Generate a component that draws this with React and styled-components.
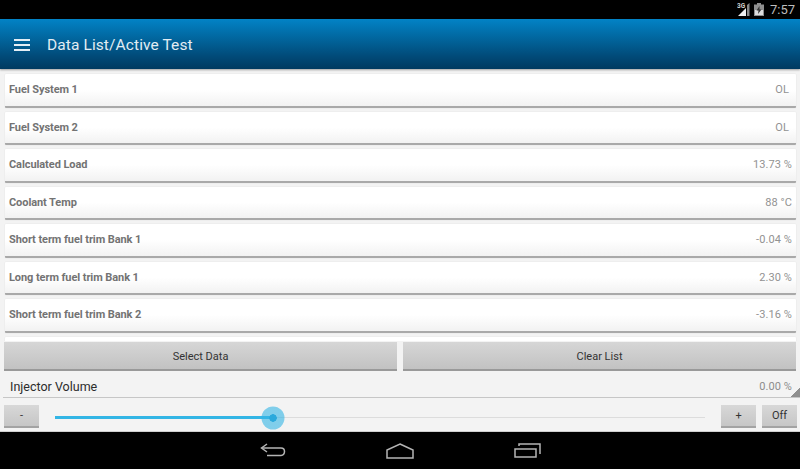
import styled, { createGlobalStyle } from "styled-components";

const rows = [
  ["Fuel System 1", "OL", true],
  ["Fuel System 2", "OL", true],
  ["Calculated Load", "13.73 %"],
  ["Coolant Temp", "88 °C"],
  ["Short term fuel trim Bank 1", "-0.04 %"],
  ["Long term fuel trim Bank 1", "2.30 %"],
  ["Short term fuel trim Bank 2", "-3.16 %"],
];

export default function App() {
  return (
    <Screen>
      <GlobalStyle />
      <StatusBar>
        <svg width="13" height="15" viewBox="0 0 13 15">
          <text x="0" y="6" fontSize="6.500" fontWeight="700" fill="#d0d0d0" fontFamily="Roboto, sans-serif">3G</text>
          <path d="M12.500 1v13H10V3z" fill="#8a8a8a" />
          <path d="M9 6v8H1z" fill="#efefef" />
        </svg>
        <svg width="10" height="13" viewBox="0 0 10 13">
          <path d="M3 0h4v1.500h3V13H0V1.500h3z" fill="#8f8f8f" />
          <path d="M1 7h8v5H1z" fill="#dcdcdc" />
          <path d="M5.500 3L2.500 7.500h2L4 11l3.500-4.500h-2z" fill="#333" />
        </svg>
        <Clock>7:57</Clock>
      </StatusBar>
      <Header>
        <Burger>
          <span />
          <span />
          <span />
        </Burger>
        <Title>Data List/Active Test</Title>
      </Header>
      <List>
        {rows.map(([name, value, bare]) => (
          <Row key={name}>
            <RowName>{name}</RowName>
            <RowValue $bare={bare}>{value}</RowValue>
          </Row>
        ))}
        <Row />
      </List>
      <Actions>
        <ActionButton>Select Data</ActionButton>
        <ActionButton>Clear List</ActionButton>
      </Actions>
      <TestRow>
        <TestName>Injector Volume</TestName>
        <TestValue>0.00 %</TestValue>
        <Corner />
      </TestRow>
      <SliderRow>
        <SmallButton>-</SmallButton>
        <Track>
          <Fill $pct={33.5} />
          <Thumb $pct={33.5} />
        </Track>
        <SmallButton>+</SmallButton>
        <SmallButton>Off</SmallButton>
      </SliderRow>
      <NavBar>
        <svg width="26" height="16" viewBox="0 0 26 16" fill="none" stroke="#b5b5b5" strokeWidth="1.500">
          <path d="M7 1L1.500 5 7 9" />
          <path d="M2 5h19q3.500 0 3.500 3.500T21 12.500H7" />
        </svg>
        <svg width="28" height="16" viewBox="0 0 28 16" fill="none" stroke="#b5b5b5" strokeWidth="1.500">
          <path d="M14 1L27 7v8H1V7z" />
        </svg>
        <svg width="27" height="15" viewBox="0 0 27 15" fill="none" stroke="#b5b5b5" strokeWidth="1.500">
          <path d="M1 6h21v8H1z" />
          <path d="M5 3V1h21v10" />
        </svg>
      </NavBar>
    </Screen>
  );
}

const GlobalStyle = createGlobalStyle`
  html, body {
    margin: 0;
    padding: 0;
    background: #000;
  }
`;

const Screen = styled.div`
  width: 800px;
  height: 469px;
  display: flex;
  flex-direction: column;
  overflow: hidden;
  background: #f3f3f3;
  font-family: Roboto, "Liberation Sans", sans-serif;
`;

const StatusBar = styled.div`
  height: 19px;
  flex: none;
  background: #000;
  display: flex;
  align-items: center;
  justify-content: flex-end;
  gap: 4px;
  padding-right: 5px;
`;

const Clock = styled.span`
  color: #bdbdbd;
  font-size: 13px;
  margin-left: 2px;
`;

const Header = styled.div`
  height: 50px;
  flex: none;
  display: flex;
  align-items: center;
  padding: 1px 0 0 14px;
  box-sizing: border-box;
  background: linear-gradient(#0283c6, #014a78 75%, #013a60);
  box-shadow: 0 1px 2px rgba(0, 0, 0, 0.35);
  position: relative;
`;

const Burger = styled.div`
  width: 16px;
  display: flex;
  flex-direction: column;
  gap: 3px;

  span {
    height: 2px;
    background: #e4eef5;
  }
`;

const Title = styled.h1`
  margin: 0 0 0 17px;
  color: #e2edf4;
  font-size: 15.5px;
  font-weight: 400;
  letter-spacing: 0.1px;
`;

const List = styled.div`
  height: 272px;
  flex: none;
  overflow: hidden;
  display: flex;
  flex-direction: column;
  gap: 4px;
  padding: 5px 4px 0 5px;
  box-sizing: border-box;
`;

const Row = styled.div`
  height: 33.5px;
  flex: none;
  box-sizing: border-box;
  display: flex;
  align-items: center;
  justify-content: space-between;
  padding: 0 4px;
  background: linear-gradient(#fff 50%, #f2f2f2);
  border-bottom: 2px solid #a9a9a9;
  border-radius: 1px;
  box-shadow: 0 0 1px rgba(0, 0, 0, 0.2);
`;

const RowName = styled.span`
  color: #737373;
  font-size: 11px;
  font-weight: 700;
  letter-spacing: -0.08px;
`;

const RowValue = styled.span`
  color: #929292;
  font-size: 11px;
  letter-spacing: 0.1px;
  padding-right: ${(p) => (p.$bare ? "3px" : "0")};
`;

const Actions = styled.div`
  height: 29px;
  flex: none;
  display: flex;
  gap: 6px;
  padding: 1px 4px 0;
`;

const ActionButton = styled.div`
  flex: 1;
  box-sizing: border-box;
  display: flex;
  align-items: center;
  justify-content: center;
  padding-top: 2px;
  color: #333;
  font-size: 11px;
  background: linear-gradient(#d6d6d6, #c2c2c2);
  border-bottom: 2px solid #999;
`;

const TestRow = styled.div`
  height: 27px;
  flex: none;
  position: relative;
  box-sizing: border-box;
  display: flex;
  align-items: center;
  justify-content: space-between;
  margin: 0 0 0 3px;
  padding: 5px 8px 0 7px;
  border-bottom: 1px solid #c6c6c6;
`;

const TestName = styled.span`
  color: #2c2c2c;
  font-size: 12.5px;
`;

const TestValue = styled.span`
  color: #8c8c8c;
  font-size: 11px;
  letter-spacing: 0.1px;
`;

const Corner = styled.div`
  position: absolute;
  right: 0;
  bottom: 0;
  width: 10px;
  height: 10px;
  background: linear-gradient(135deg, transparent 50%, #8f8f8f 50%);
`;

const SliderRow = styled.div`
  height: 34px;
  flex: none;
  display: flex;
  align-items: center;
  padding: 3px 3px 0 4px;
  gap: 6px;
  box-sizing: border-box;
  border-bottom: 1px solid #cfcfcf;
`;

const SmallButton = styled.div`
  width: 35px;
  height: 23px;
  box-sizing: border-box;
  display: flex;
  align-items: center;
  justify-content: center;
  color: #333;
  font-size: 11px;
  background: linear-gradient(#d8d8d8, #c6c6c6);
  border-bottom: 2px solid #a3a3a3;
`;

const Track = styled.div`
  flex: 1;
  height: 1px;
  margin: 3px 10px 0;
  position: relative;
  background: #dcdcdc;
`;

const Fill = styled.div`
  position: absolute;
  left: 0;
  top: -1px;
  height: 3px;
  width: ${(p) => p.$pct}%;
  background: #33b5e5;
`;

const Thumb = styled.div`
  position: absolute;
  left: ${(p) => p.$pct}%;
  top: 0.5px;
  width: 23px;
  height: 23px;
  transform: translate(-50%, -50%);
  border-radius: 50%;
  background: radial-gradient(circle, #2aa9dc 3.5px, rgba(51, 181, 229, 0.6) 4px);
`;

const NavBar = styled.div`
  flex: 1;
  background: #000;
  display: flex;
  align-items: center;
  justify-content: center;
  gap: 100px;
`;
